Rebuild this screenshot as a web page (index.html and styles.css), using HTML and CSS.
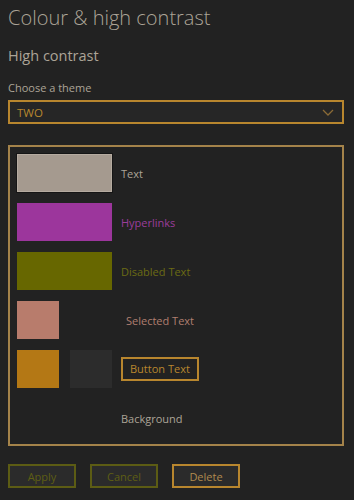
FILE: index.html
```html
<!DOCTYPE html>
<html lang="en">
<head>
    <meta charset="UTF-8">
    <meta name="viewport" content="width=device-width, initial-scale=1.0">
    <title>Colour &amp; high contrast</title>
    <link rel="stylesheet" href="styles.css">
</head>
<body>
    <h1 class="title">Colour &amp; high contrast</h1>
    <h2 class="subtitle">High contrast</h2>

    <div class="label">Choose a theme</div>
    <div class="select">
        <span>TWO</span>
        <svg class="chevron" width="12" height="7" viewBox="0 0 12 7">
            <polyline points="1,1 6,6 11,1" fill="none" stroke="#8a6a36" stroke-width="1.3"/>
        </svg>
    </div>

    <div class="preview">
        <div class="row">
            <div class="swatch wide sw-text"></div>
            <span class="name c-text">Text</span>
        </div>
        <div class="row">
            <div class="swatch wide sw-link"></div>
            <span class="name c-link">Hyperlinks</span>
        </div>
        <div class="row">
            <div class="swatch wide sw-disabled"></div>
            <span class="name c-disabled">Disabled Text</span>
        </div>
        <div class="row">
            <div class="swatch small sw-selected"></div>
            <span class="name c-selected selected-gap">Selected Text</span>
        </div>
        <div class="row">
            <div class="swatch small sw-button"></div>
            <div class="swatch small sw-buttonbg"></div>
            <span class="name button-text">Button Text</span>
        </div>
        <div class="row">
            <div class="swatch wide sw-none"></div>
            <span class="name c-text">Background</span>
        </div>
    </div>

    <div class="actions">
        <button class="btn disabled">Apply</button>
        <button class="btn disabled">Cancel</button>
        <button class="btn active">Delete</button>
    </div>
</body>
</html>
```

FILE: styles.css
```css
body {
    font-family: "Open Sans", "Noto Sans", sans-serif;
    background-color: #222222;
    color: #aca497;
    margin: 0;
    padding: 0 10px 0 8px;
    width: 336px;
}

.title {
    font-size: 20px;
    font-weight: 300;
    margin: 5px 0 0 0;
    line-height: 26px;
}

.subtitle {
    font-size: 14.5px;
    font-weight: 400;
    margin: 15px 0 0 0;
    line-height: 20px;
}

.label {
    font-size: 11px;
    margin-top: 14px;
    line-height: 16px;
}

.select {
    margin-top: 4px;
    height: 20px;
    border: 2px solid #b8862e;
    background-color: #262626;
    display: flex;
    align-items: center;
    justify-content: space-between;
    padding: 0 8px 0 7px;
    color: #b8862e;
    font-size: 11.5px;
}

.preview {
    margin-top: 21px;
    border: 2px solid #a4834a;
    padding: 7px 7px 9px 7px;
    display: flex;
    flex-direction: column;
    gap: 11px;
    height: 281px;
}

.row {
    display: flex;
    align-items: center;
    height: 38px;
}

.swatch {
    height: 38px;
    box-sizing: border-box;
    flex-shrink: 0;
}

.wide {
    width: 95px;
}

.small {
    width: 42px;
}

.sw-text {
    background-color: #a59a8f;
    border: 1px solid #b5aba0;
    box-shadow: 0 0 0 1px #151515;
}

.sw-link {
    background-color: #9c369c;
}

.sw-disabled {
    background-color: #676700;
}

.sw-selected {
    background-color: #b87c6c;
}

.sw-button {
    background-color: #b47815;
}

.sw-buttonbg {
    background-color: #2c2c2c;
    margin-left: 11px;
}

.sw-none {
    background-color: transparent;
}

.name {
    font-size: 11px;
    margin-left: 9px;
}

.selected-gap {
    margin-left: 67px;
}

.c-text {
    color: #aca497;
}

.c-link {
    color: #9b3d9b;
}

.c-disabled {
    color: #6b6b14;
}

.c-selected {
    color: #b07f70;
}

.button-text {
    margin-left: 9px;
    border: 2px solid #b8862e;
    color: #b8862e;
    padding: 0 7px;
    height: 20px;
    line-height: 20px;
}

.actions {
    display: flex;
    gap: 14px;
    margin-top: 18px;
}

.btn {
    font-family: "Open Sans", "Noto Sans", sans-serif;
    font-size: 11px;
    width: 68px;
    height: 24px;
    background-color: #2b2b2b;
    padding: 0;
}

.btn.disabled {
    border: 2px solid #5c5c14;
    color: #5e5e14;
}

.btn.active {
    border: 2px solid #b8862e;
    color: #b08a4e;
}
```
